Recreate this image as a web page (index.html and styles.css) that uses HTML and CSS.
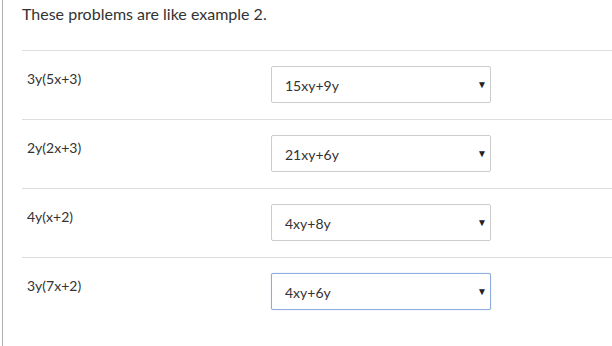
FILE: index.html
```html
<!DOCTYPE html>
<html lang="en">
<head>
    <meta charset="UTF-8">
    <meta name="viewport" content="width=device-width, initial-scale=1.0">
    <title>Problems</title>
    <link rel="stylesheet" href="styles.css">
</head>
<body>
    <div class="panel">
        <p class="intro">These problems are like example 2.</p>

        <div class="problem">
            <div class="expr">3y(5x+3)</div>
            <div class="select-wrap">
                <select>
                    <option>15xy+9y</option>
                </select>
                <span class="arrow">&#9660;</span>
            </div>
        </div>
        <div class="problem">
            <div class="expr">2y(2x+3)</div>
            <div class="select-wrap">
                <select>
                    <option>21xy+6y</option>
                </select>
                <span class="arrow">&#9660;</span>
            </div>
        </div>
        <div class="problem">
            <div class="expr">4y(x+2)</div>
            <div class="select-wrap">
                <select>
                    <option>4xy+8y</option>
                </select>
                <span class="arrow">&#9660;</span>
            </div>
        </div>
        <div class="problem">
            <div class="expr">3y(7x+2)</div>
            <div class="select-wrap">
                <select class="focused">
                    <option>4xy+6y</option>
                </select>
                <span class="arrow">&#9660;</span>
            </div>
        </div>
    </div>
</body>
</html>
```

FILE: styles.css
```css
body {
    margin: 0;
    font-family: Lato, 'Liberation Sans', sans-serif;
    color: #333;
    background: #fff;
}

.panel {
    margin-left: 2px;
    border-left: 1px solid #b0b0b0;
    padding-left: 19px;
    min-height: 346px;
    box-sizing: border-box;
}

.intro {
    margin: 0;
    padding-top: 4px;
    padding-bottom: 26px;
    font-size: 16px;
    line-height: 20px;
}

.problem {
    display: flex;
    align-items: flex-start;
    border-top: 1px solid #ddd;
    padding: 15px 0 16px 5px;
}

.expr {
    width: 244px;
    font-size: 14px;
    line-height: 18px;
    padding-top: 4px;
}

.select-wrap {
    position: relative;
    width: 220px;
}

select {
    -webkit-appearance: none;
    appearance: none;
    width: 220px;
    height: 37px;
    padding: 2px 0 0 13px;
    border: 1px solid #ccc;
    border-radius: 2px;
    background: #fff;
    font-family: Lato, 'Liberation Sans', sans-serif;
    font-size: 14px;
    color: #333;
    outline: none;
}

select.focused {
    border-color: #8eacde;
    box-shadow: 0 0 1px #8eacde;
}

.arrow {
    position: absolute;
    right: 4px;
    top: 12px;
    font-size: 10px;
    color: #222;
    pointer-events: none;
}
```
